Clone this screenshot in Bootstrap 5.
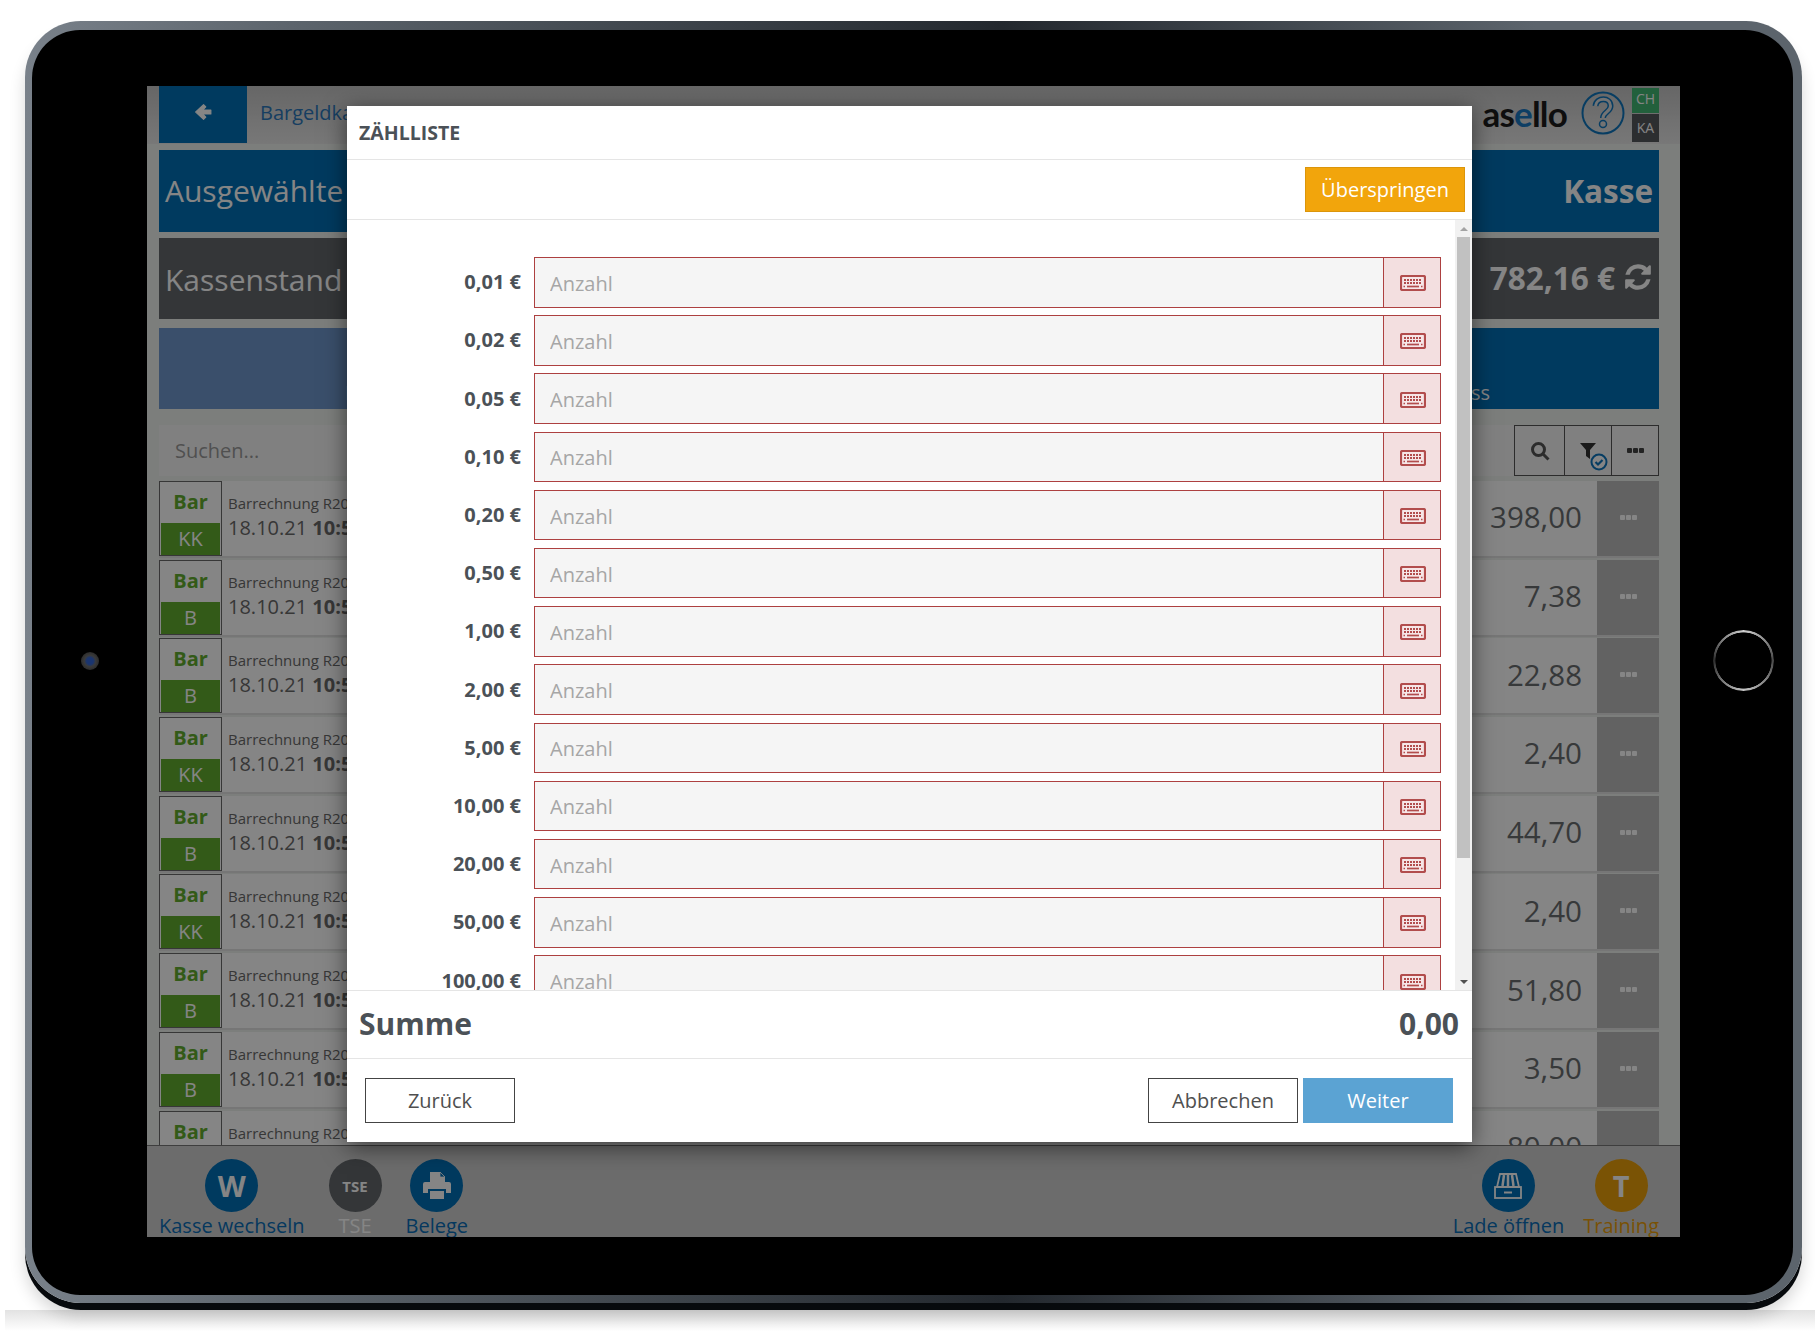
<!DOCTYPE html>
<html lang="de">
<head>
  <meta charset="UTF-8">
  <meta name="viewport" content="width=device-width, initial-scale=1.0">
  <title>asello - Zählliste</title>
  <link href="https://cdn.jsdelivr.net/npm/bootstrap@5.3.0/dist/css/bootstrap.min.css" rel="stylesheet">
  <style>
    body {
      margin: 0;
      height: 1331px;
      overflow: hidden;
      background: #fff;
      font-family: "Open Sans", "Liberation Sans", sans-serif;
    }
    .tablet-shell {
      position: relative;
      width: 1777px;
      height: 1282px;
      margin: 21px 0 0 25px;
      padding: 9px 9px 8px 7px;
      border-radius: 56px;
      background: linear-gradient(90deg, #79818a 0, #5c646c 15%, #23282e 55%, #5c646c 85%, #5c646c 100%);
      box-shadow: 0 7px 0 #070a0d, 0 14px 16px rgba(0, 0, 0, .16);
    }
    .tablet-inner {
      height: 100%;
      padding: 56px 113px 58px 115px;
      border-radius: 48px;
      background: #000;
    }
    .tablet-cam {
      position: absolute;
      left: 56px;
      top: 631px;
      width: 18px;
      height: 18px;
      border-radius: 50%;
      background: radial-gradient(circle, #1a3570 0, #1a3570 26%, #3a3a3a 45%, #1c1c1c 100%);
    }
    .tablet-home {
      position: absolute;
      left: 1688px;
      top: 609px;
      width: 61px;
      height: 61px;
      border-radius: 50%;
      background: conic-gradient(#d0d0d0 0, #4a4a4a 25%, #c4c4c4 50%, #2e2e2e 75%, #d0d0d0 100%);
      -webkit-mask: radial-gradient(closest-side, transparent 91%, #000 93%);
      mask: radial-gradient(closest-side, transparent 91%, #000 93%);
    }
    .pos-screen {
      position: relative;
      height: 1151px;
      width: 1533px;
      display: flex;
      flex-direction: column;
      background: #eef2ee;
    }
    .pos-top {
      height: 58px;
      flex: none;
      padding: 0 21px 0 12px;
      background: linear-gradient(#c4c4c4, #e6e6e6);
    }
    .back-tile {
      width: 88px;
      height: 57px;
      padding-bottom: 5px;
      background: #006fb7;
    }
    .crumb {
      margin: 0 0 5px 13px;
      font-size: 20px;
      color: #2c78bb;
    }
    .brand-word {
      font-family: Lato, "Open Sans", sans-serif;
      font-weight: 700;
      font-size: 35px;
      line-height: 1;
      letter-spacing: -.8px;
      color: #1c1c1c;
      margin: 0 12px 3px 0;
    }
    .brand-word span { color: #1a78c0; }
    .help-mark { margin: 0 0 4px 2px; }
    .env-tags {
      width: 27px;
      margin-left: 7px;
      align-self: flex-start;
      text-align: center;
      font-size: 14px;
      color: #fff;
    }
    .env-tags div:first-child { height: 25px; line-height: 22px; background: #42b873; margin-bottom: 1px; }
    .env-tags div:last-child { height: 28px; line-height: 27px; background: #55585d; }
    .pos-stack {
      flex: 1;
      min-height: 0;
      padding: 6px 21px 0 12px;
      display: flex;
      flex-direction: column;
    }
    .info-band {
      flex: none;
      height: 81.5px;
      margin-bottom: 6px;
      padding: 0 6px;
      font-size: 30px;
      color: #fff;
    }
    .info-band b { font-weight: 700; font-size: 31.5px; }
    .band-blue { background: #006fb7; }
    .band-dark { background: #64686c; padding-top: 3px; }
    .cash-total { margin-bottom: 5px; }
    .tab-band {
      flex: none;
      height: 81px;
      margin-top: 3px;
      font-size: 20px;
      color: #fff;
      line-height: 1;
    }
    .tab-left { width: 50%; padding: 0 0 6px 186px; background: #6f98ce; }
    .tab-right { width: 50%; padding: 0 169px 6px 0; background: #006fb7; text-align: right; }
    .search-line {
      flex: none;
      height: 51px;
      margin-top: 16px;
      margin-bottom: 5px;
      background: #f6f6f6;
    }
    .search-line .form-control {
      height: 51px;
      padding-left: 16px;
      background: transparent;
      border: 0;
      border-radius: 0;
      font-size: 20px;
      box-shadow: none;
    }
    .search-line .form-control::placeholder { color: #9a9a9a; }
    .tool-btns { width: 145px; flex: none; border: 1px solid #555; }
    .tool-btn {
      position: relative;
      width: 49px;
      flex: none;
      padding: 0;
      border: 0;
      border-right: 1px solid #555;
      border-radius: 0;
      display: flex;
      align-items: center;
      justify-content: center;
    }
    .tool-btn:nth-child(1) { width: 50px; }
    .tool-btn:nth-child(2) { width: 47px; }
    .tool-btn:last-child { border-right: 0; width: 46px; }
    .sale-list {
      flex: 1;
      min-height: 0;
      overflow: hidden;
    }
    .sale-row {
      height: 75px;
      margin-bottom: 3.7px;
      background: #fff;
      box-shadow: 0 2px 0 #e3e3e3;
    }
    .pay-box {
      width: 63px;
      flex: none;
      border: 1px solid #6a6a6a;
      padding: 0 1px 1px 1px;
      text-align: center;
    }
    .pay-type {
      height: 41px;
      line-height: 39px;
      font-size: 20px;
      font-weight: 700;
      color: #62ad2e;
    }
    .pay-tag {
      height: 32px;
      line-height: 32px;
      font-size: 20px;
      color: #fff;
      background: #62ad2e;
    }
    .sale-info { margin-left: 6px; padding-top: 11px; color: #6a6a6a; }
    .sale-title { font-size: 15px; line-height: 23px; }
    .sale-when { font-size: 20px; line-height: 26px; }
    .sale-amount { font-size: 29.5px; color: #6a6d70; padding: 0 15px 2px 0; }
    .row-more {
      width: 62px;
      flex: none;
      padding-bottom: 2px;
      background: #bcbcbc;
    }
    .dot-trio { display: flex; gap: 1px; }
    .dot-trio i { width: 5px; height: 5px; border-radius: 1px; background: #fff; }
    .dot-trio.dots-dark i { background: #444; }
    .pos-foot {
      flex: none;
      height: 92px;
      padding: 13px 21px 0 12px;
      overflow: hidden;
      gap: 24px;
      background: #d0d0d0;
      border-top: 1px solid #777;
    }
    .foot-item { font-size: 20px; line-height: 26px; text-align: center; color: #0a6cb5; }
    .foot-item.item-grey { color: #fff; }
    .foot-item.item-gold { color: #e89c0a; }
    .foot-item.item-drawer { margin-right: -5px; }
    .foot-disc {
      width: 53px;
      height: 53px;
      margin: 0 auto 1px;
      border-radius: 50%;
      display: flex;
      align-items: center;
      justify-content: center;
      background: #006fb7;
      color: #fff;
      font-weight: 700;
      font-size: 29px;
    }
    .item-grey .foot-disc { background: #64686c; font-size: 15px; }
    .item-gold .foot-disc { background: #ea9f0a; }
    .screen-dim {
      position: absolute;
      inset: 0;
      background: rgba(0, 0, 0, .48);
    }
    .count-modal {
      position: absolute;
      left: 200px;
      top: 20px;
      width: 1125px;
      height: 1036px;
      border: 0;
      border-radius: 0;
      background: #fff;
      color: #4b5157;
      box-shadow: 0 5px 22px rgba(0, 0, 0, .55);
    }
    .count-head {
      height: 54px;
      flex: none;
      padding: 0 12px;
      border-bottom: 1px solid #e5e5e5;
      font-size: 19.5px;
      font-weight: 700;
    }
    .count-skip {
      height: 60px;
      flex: none;
      padding: 0 7px 0 0;
      border-bottom: 1px solid #e5e5e5;
    }
    .btn-skip {
      width: 160px;
      height: 45px;
      padding: 0;
      border: 1px solid #db950b;
      border-radius: 0;
      background: #f2a50c;
      color: #fff;
      font-size: 20px;
    }
    .count-body { flex: 1; min-height: 0; }
    .count-list {
      flex: 1;
      min-width: 0;
      overflow: hidden;
      padding: 37px 14px 0 0;
    }
    .count-row { height: 50.5px; margin-bottom: 7.7px; }
    .count-label {
      width: 174px;
      flex: none;
      margin-right: 13px;
      text-align: right;
      font-size: 20px;
      font-weight: 700;
    }
    .count-row .input-group { height: 100%; }
    .count-row .form-control {
      padding: 3px 0 0 15px;
      border: 1.5px solid #ad4040;
      border-right: 0;
      border-radius: 0;
      background: #f5f5f5;
      font-size: 20px;
    }
    .count-row .form-control::placeholder { color: #a6a6a6; }
    .count-row .input-group-text {
      width: 58px;
      justify-content: center;
      padding: 2px 0 0 1px;
      margin-left: 0 !important;
      border: 1.5px solid #ad4040;
      border-radius: 0;
      background: #f3dfe0;
    }
    .fake-scroll {
      width: 17px;
      flex: none;
      background: #f1f1f1;
    }
    .scroll-thumb { width: 13px; margin: 0 auto; height: 621px; background: #c1c1c1; }
    .scroll-arrow { height: 17px; display: flex; align-items: center; justify-content: center; }
    .scroll-arrow i {
      width: 0;
      height: 0;
      border-left: 4px solid transparent;
      border-right: 4px solid transparent;
    }
    .arrow-up i { border-bottom: 4px solid #a3a3a3; }
    .arrow-down i { border-top: 4px solid #505050; }
    .count-sum {
      height: 69px;
      flex: none;
      padding: 0 13px 2px 12px;
      border-top: 1px solid #e5e5e5;
      border-bottom: 1px solid #e5e5e5;
      font-size: 30px;
      font-weight: 700;
    }
    .count-foot {
      flex: none;
      height: 83px;
      padding: 0 19px 0 18px;
      gap: 5px;
    }
    .btn-plain, .btn-go {
      width: 150px;
      height: 45px;
      padding: 0;
      border-radius: 0;
      font-size: 20px;
    }
    .btn-plain { border: 1px solid #444; background: #fff; color: #4f4f4f; }
    .btn-go { border: 1px solid #5ba3d3; background: #5ba3d3; color: #fff; }
    .page-floor {
      position: absolute;
      left: 5px;
      right: 0;
      top: 1310px;
      height: 21px;
      background: linear-gradient(#e2e2e2, #fff);
    }
  </style>
</head>
<body>
  <svg width="0" height="0" class="position-absolute">
    <symbol id="kbd" viewBox="0 0 26 16">
      <rect x="1" y="1" width="24" height="14" rx="1.5" fill="#f6e6e7" stroke="#b24d4d" stroke-width="2.2"/>
      <path d="M4 5h18M4 8h18" stroke="#b24d4d" stroke-width="1.8" stroke-dasharray="2 1"/>
      <path d="M7 11.500h12" stroke="#b24d4d" stroke-width="1.7"/>
      <path d="M3.500 11.500h1.500M21 11.500h1.500" stroke="#b24d4d" stroke-width="1.700"/>
    </symbol>
  </svg>

  <div class="page-floor"></div>

  <div class="tablet-shell">
    <div class="tablet-cam"></div>
    <div class="tablet-home"></div>
    <div class="tablet-inner">
      <div class="pos-screen">

        <div class="pos-top d-flex align-items-center">
          <div class="back-tile d-flex align-items-center justify-content-center align-self-start">
            <svg width="18" height="18" viewBox="0 0 16 16"><path d="M8.500 1.500 1.500 8l7 6.500 2-2-2.800-2.800H15V6.300H7.700l2.800-2.800z" fill="#fff" stroke="#fff" stroke-linejoin="round"/></svg>
          </div>
          <div class="crumb">Bargeldkasse</div>
          <div class="ms-auto d-flex align-items-center">
            <div class="brand-word">as<span>e</span>llo</div>
            <svg class="help-mark" width="44" height="44" viewBox="0 0 44 44">
              <circle cx="22" cy="22" r="20.500" fill="none" stroke="#0f75bd" stroke-width="2"/>
              <path d="M14.500 15c1-9 15-9 15 0 0 6-7.500 6-7.500 12" fill="none" stroke="#0f75bd" stroke-width="6"/>
              <path d="M14.500 15c1-9 15-9 15 0 0 6-7.500 6-7.500 12" fill="none" stroke="#dcdcdc" stroke-width="3"/>
              <circle cx="22" cy="33" r="3.500" fill="#dcdcdc" stroke="#0f75bd" stroke-width="1.500"/>
            </svg>
            <div class="env-tags"><div>CH</div><div>KA</div></div>
          </div>
        </div>

        <div class="pos-stack">
          <div class="info-band band-blue d-flex align-items-center justify-content-between">
            <span>Ausgewählte Kasse</span><b>Kasse</b>
          </div>
          <div class="info-band band-dark d-flex align-items-center justify-content-between">
            <span>Kassenstand</span>
            <span class="cash-total d-flex align-items-center gap-2"><b>782,16 €</b>
              <svg width="30" height="30" viewBox="0 0 1792 1792"><path fill="#fff" d="M1639 1056q0 5-1 7-64 268-268 434.5t-478 166.5q-146 0-282.5-55t-243.5-157l-129 129q-19 19-45 19t-45-19-19-45v-448q0-26 19-45t45-19h448q26 0 45 19t19 45-19 45l-137 137q71 66 161 102t187 36q134 0 250-65t186-179q11-17 53-117 8-23 30-23h192q13 0 22.500 9.500t9.500 22.500zm25-800v448q0 26-19 45t-45 19h-448q-26 0-45-19t-19-45 19-45l138-138q-148-137-349-137-134 0-250 65t-186 179q-11 17-53 117-8 23-30 23h-199q-13 0-22.500-9.500t-9.500-22.500v-7q65-268 270-434.500t480-166.500q146 0 284 55.500t245 156.500l130-129q19-19 45-19t45 19 19 45z"/></svg>
            </span>
          </div>
          <div class="tab-band d-flex">
            <div class="tab-left d-flex align-items-end">Einlage</div>
            <div class="tab-right d-flex align-items-end justify-content-end">Kassenabschluss</div>
          </div>
          <div class="search-line d-flex">
            <input class="form-control" type="text" placeholder="Suchen...">
            <div class="tool-btns d-flex">
              <button class="btn tool-btn">
                <svg width="20" height="20" viewBox="0 0 20 20"><circle cx="8.500" cy="8.500" r="6" fill="none" stroke="#555" stroke-width="3"/><path d="M13 13l5.500 5.500" stroke="#555" stroke-width="3"/></svg>
              </button>
              <button class="btn tool-btn">
                <svg width="40" height="40" viewBox="0 0 40 40"><path d="M12 12h16l-6 7v9l-4-3v-6z" fill="#333"/><circle cx="31" cy="31" r="7.500" fill="#fff" stroke="#0f75bd" stroke-width="2"/><path d="M27.500 31l2.500 2.500 4.500-4.500" fill="none" stroke="#0f75bd" stroke-width="2.200"/></svg>
              </button>
              <button class="btn tool-btn">
                <span class="dot-trio dots-dark"><i></i><i></i><i></i></span>
              </button>
            </div>
          </div>
          <div class="sale-list" id="saleList"></div>
        </div>

        <div class="pos-foot d-flex">
          <div class="foot-item"><div class="foot-disc">W</div>Kasse wechseln</div>
          <div class="foot-item item-grey"><div class="foot-disc">TSE</div>TSE</div>
          <div class="foot-item">
            <div class="foot-disc">
              <svg width="30" height="32" viewBox="0 0 30 32"><path d="M8 2h10l5 5v9H8z" fill="#fff"/><path d="M18 2l5 5h-5z" fill="#006fb7" stroke="#fff" stroke-width=".8"/><path d="M3 12h24a2 2 0 0 1 2 2v9h-5v-4H6v4H1v-9a2 2 0 0 1 2-2z" fill="#fff"/><rect x="7.500" y="20.500" width="15" height="9" fill="#fff" stroke="#006fb7"/></svg>
            </div>
            Belege
          </div>
          <div class="foot-item item-drawer ms-auto">
            <div class="foot-disc">
              <svg width="30" height="30" viewBox="0 0 30 30" fill="none" stroke="#fff"><path d="M7 3h16l3 13H4z" stroke-width="1.800"/><path d="M11 4l-1.500 11M15 4v11M19 4l1.500 11" stroke-width="2.500"/><rect x="2" y="16" width="26" height="11" stroke-width="1.800"/><path d="M11 21.500h8" stroke-width="2"/></svg>
            </div>
            Lade öffnen
          </div>
          <div class="foot-item item-gold"><div class="foot-disc">T</div>Training</div>
        </div>

        <div class="screen-dim"></div>

        <div class="modal-content count-modal">
          <div class="count-head d-flex align-items-center">ZÄHLLISTE</div>
          <div class="count-skip d-flex align-items-center justify-content-end">
            <button class="btn btn-skip">Überspringen</button>
          </div>
          <div class="count-body d-flex">
            <div class="count-list" id="countList"></div>
            <div class="fake-scroll d-flex flex-column">
              <div class="scroll-arrow arrow-up"><i></i></div>
              <div class="scroll-thumb"></div>
              <div class="flex-grow-1"></div>
              <div class="scroll-arrow arrow-down"><i></i></div>
            </div>
          </div>
          <div class="count-sum d-flex align-items-center justify-content-between">
            <span>Summe</span><span>0,00</span>
          </div>
          <div class="count-foot d-flex align-items-center">
            <button class="btn btn-plain me-auto">Zurück</button>
            <button class="btn btn-plain">Abbrechen</button>
            <button class="btn btn-go">Weiter</button>
          </div>
        </div>

      </div>
    </div>
  </div>

  <script src="https://cdn.jsdelivr.net/npm/bootstrap@5.3.0/dist/js/bootstrap.bundle.min.js"></script>
  <script>
    // Belege hinter dem Dialog
    const sales = [
      ['KK', '398,00'], ['B', '7,38'], ['B', '22,88'], ['KK', '2,40'], ['B', '44,70'],
      ['KK', '2,40'], ['B', '51,80'], ['B', '3,50'], ['B', '80,00']
    ];
    document.getElementById('saleList').innerHTML = sales.map(s => `
      <div class="sale-row d-flex align-items-stretch">
        <div class="pay-box"><div class="pay-type">Bar</div><div class="pay-tag">${s[0]}</div></div>
        <div class="sale-info">
          <div class="sale-title">Barrechnung R2021</div>
          <div class="sale-when">18.10.21 <b>10:52</b></div>
        </div>
        <div class="sale-amount ms-auto d-flex align-items-center">${s[1]}</div>
        <div class="row-more d-flex align-items-center justify-content-center"><span class="dot-trio"><i></i><i></i><i></i></span></div>
      </div>`).join('');

    // Zählliste
    const coins = ['0,01', '0,02', '0,05', '0,10', '0,20', '0,50', '1,00', '2,00', '5,00', '10,00', '20,00', '50,00', '100,00'];
    document.getElementById('countList').innerHTML = coins.map(c => `
      <div class="count-row d-flex align-items-center">
        <div class="count-label">${c} €</div>
        <div class="input-group flex-grow-1">
          <input type="text" class="form-control" placeholder="Anzahl">
          <span class="input-group-text"><svg width="26" height="16"><use href="#kbd"/></svg></span>
        </div>
      </div>`).join('');
  </script>
</body>
</html>
